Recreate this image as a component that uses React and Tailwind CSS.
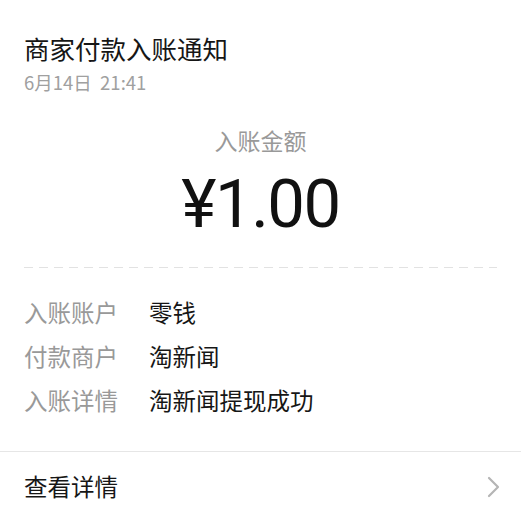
import React from 'react';

const rows = [
  { label: '入账账户', value: '零钱' },
  { label: '付款商户', value: '淘新闻' },
  { label: '入账详情', value: '淘新闻提现成功' },
];

export default function App() {
  return (
    <div
      className="w-[521px] h-[526px] bg-white overflow-hidden"
      style={{ fontFamily: '"Noto Sans CJK SC", "Noto Sans", sans-serif' }}
    >
      <div className="px-6 pt-[31px]">
        <div className="text-[25.5px] leading-[33px] text-[#161616]">商家付款入账通知</div>
        <div className="mt-[6px] text-[18.5px] leading-[24px] text-[#a0a0a0]">6月14日&nbsp;&nbsp;21:41</div>

        <div className="mt-[35px] text-center text-[23px] leading-[22px] text-[#999]">入账金额</div>
        <div
          className="mt-[21px] text-center text-[67px] leading-[64px] text-[#111] tracking-[-1.5px]"
          style={{ fontFamily: 'Roboto, "Noto Sans", sans-serif' }}
        >
          ¥1.00
        </div>

        {/* dashed divider */}
        <div className="mt-[31px] h-px bg-[repeating-linear-gradient(to_right,#e2e2e2_0_9px,transparent_9px_15px)]" />

        <div className="mt-[22px] flex flex-col">
          {rows.map((r) => (
            <div key={r.label} className="flex text-[23.5px] leading-[44px]">
              <span className="w-[125px] text-[#999]">{r.label}</span>
              <span className="text-[#161616]">{r.value}</span>
            </div>
          ))}
        </div>
      </div>

      <div className="mt-[29px] border-t border-[#e6e6e6]" />
      <div className="flex items-center justify-between pl-6 pr-[20px] h-[70px]">
        <span className="text-[23.5px] text-[#161616]">查看详情</span>
        <svg width="14" height="22" viewBox="0 0 14 22" fill="none">
          <path d="M2 2l9 9-9 9" stroke="#b5b5b5" strokeWidth="2.2" strokeLinecap="round" strokeLinejoin="round" />
        </svg>
      </div>
    </div>
  );
}
